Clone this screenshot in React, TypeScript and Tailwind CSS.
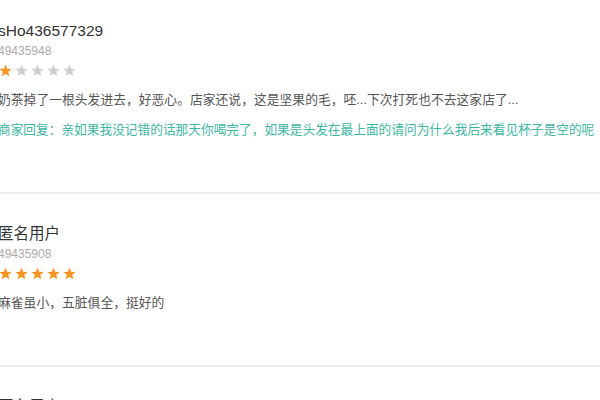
const reviews = [
  {
    name: "sHo436577329",
    id: "49435948",
    stars: 1,
    text: "奶茶掉了一根头发进去，好恶心。店家还说，这是坚果的毛，呸...下次打死也不去这家店了...",
    reply: "商家回复：亲如果我没记错的话那天你喝完了，如果是头发在最上面的请问为什么我后来看见杯子是空的呢",
  },
  {
    name: "匿名用户",
    id: "49435908",
    stars: 5,
    text: "麻雀虽小，五脏俱全，挺好的",
  },
  {
    name: "匿名用户",
    id: "49435871",
    stars: 5,
    text: "好喝",
  },
];

const Star = ({ on }: { on: boolean }) => (
  <svg width="13" height="13" viewBox="0 0 24 24" className="shrink-0">
    <polygon
      points="12,1 15.1,8.6 23.3,9.2 17,14.5 19,22.5 12,18.2 5,22.5 7,14.5 0.7,9.2 8.9,8.6"
      fill={on ? "#f7931e" : "#cfcfcf"}
    />
  </svg>
);

export default function App() {
  return (
    <div
      className="w-[600px] h-[400px] overflow-hidden bg-white"
      style={{ fontFamily: '"Liberation Sans", "Noto Sans CJK SC", sans-serif' }}
    >
      <div className="-mt-[9px] -ml-[2px]">
        {reviews.map((r, i) => (
          <div key={i} className="pt-[30px] pb-[52px] border-b-2 border-[#efefef] ml-[2px]">
            <div className="-ml-[2px] h-5 leading-5 text-[15.5px] text-[#333] whitespace-nowrap">{r.name}</div>
            <div className="-ml-[2px] mt-[2px] h-4 leading-4 text-[12px] text-[#aaa]">{r.id}</div>
            <div className="-ml-[1px] mt-[5px] flex gap-[3px] h-[13px]">
              {[0, 1, 2, 3, 4].map((s) => (
                <Star key={s} on={s < r.stars} />
              ))}
            </div>
            <p className="-ml-[2px] mt-[13px] leading-5 text-[12.8px] text-[#555] whitespace-nowrap">{r.text}</p>
            {r.reply && (
              <p className="-ml-[2px] mt-[10px] leading-5 text-[12.7px] text-[#3db6a3] whitespace-nowrap">{r.reply}</p>
            )}
          </div>
        ))}
      </div>
    </div>
  );
}
